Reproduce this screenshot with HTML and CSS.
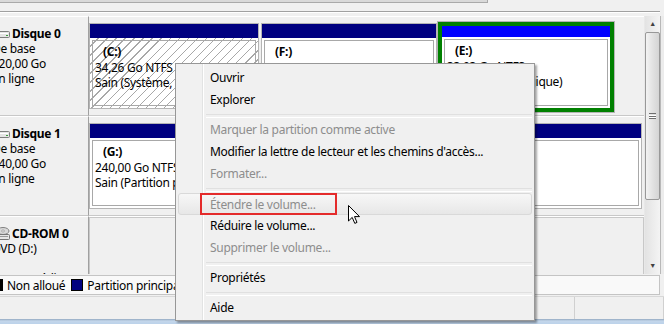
FILE: index.html
```html
<!DOCTYPE html>
<html lang="fr">
<head>
    <meta charset="UTF-8">
    <title>Gestion des disques</title>
    <link rel="stylesheet" href="styles.css">
</head>
<body>
    <div class="window">
        <!-- bottom of the volume list pane + splitter -->
        <div class="top-strip">
            <div class="hscroll"></div>
            <div class="splitter"></div>
        </div>

        <div class="main">
            <div class="disks">
                <!-- Disque 0 -->
                <div class="disk">
                    <div class="disk-label">
                        <div class="line title">
                            <svg class="drive-icon" width="20" height="10" viewBox="0 0 20 10"><rect x="1.5" y="2.5" width="17" height="6" rx="1" fill="#e4e4e4" stroke="#7d7d7d"/><rect x="3" y="4" width="14" height="1" fill="#fff"/><rect x="15" y="6" width="2" height="1" fill="#3c9a3c"/></svg>
                            <b>Disque 0</b>
                        </div>
                        <div class="line">De base</div>
                        <div class="line">120,00 Go</div>
                        <div class="line">En ligne</div>
                    </div>
                    <div class="disk-body">
                        <div class="part part-c">
                            <div class="part-bar"></div>
                            <div class="part-body hatched">
                                <div class="part-inner">
                                    <div class="name">(C:)</div>
                                    <div>34,26 Go NTFS</div>
                                    <div>Sain (Système, Démarrer, Fichier d'échange, Actif, Vidage sur incident, Partition principale)</div>
                                </div>
                            </div>
                        </div>
                        <div class="part part-f">
                            <div class="part-bar"></div>
                            <div class="part-body">
                                <div class="part-inner">
                                    <div class="name">(F:)</div>
                                    <div>51,81 Go NTFS</div>
                                    <div>Sain (Partition principale)</div>
                                </div>
                            </div>
                        </div>
                        <div class="part part-e">
                            <div class="part-bar logical"></div>
                            <div class="part-body">
                                <div class="part-inner">
                                    <div class="name">(E:)</div>
                                    <div>33,93 Go NTFS</div>
                                    <div>Sain (Lecteur logique)</div>
                                </div>
                            </div>
                        </div>
                    </div>
                </div>

                <!-- Disque 1 -->
                <div class="disk">
                    <div class="disk-label">
                        <div class="line title">
                            <svg class="drive-icon" width="20" height="10" viewBox="0 0 20 10"><rect x="1.5" y="2.5" width="17" height="6" rx="1" fill="#e4e4e4" stroke="#7d7d7d"/><rect x="3" y="4" width="14" height="1" fill="#fff"/><rect x="15" y="6" width="2" height="1" fill="#3c9a3c"/></svg>
                            <b>Disque 1</b>
                        </div>
                        <div class="line">De base</div>
                        <div class="line">240,00 Go</div>
                        <div class="line">En ligne</div>
                    </div>
                    <div class="disk-body">
                        <div class="part part-g">
                            <div class="part-bar"></div>
                            <div class="part-body">
                                <div class="part-inner">
                                    <div class="name">(G:)</div>
                                    <div>240,00 Go NTFS</div>
                                    <div>Sain (Partition principale)</div>
                                </div>
                            </div>
                        </div>
                    </div>
                </div>

                <!-- CD-ROM 0 -->
                <div class="disk">
                    <div class="disk-label">
                        <div class="line title">
                            <svg class="drive-icon" width="20" height="14" viewBox="0 0 20 14"><ellipse cx="12" cy="4" rx="6" ry="3.5" fill="#d8d8d8" stroke="#808080"/><ellipse cx="12" cy="4" rx="1.5" ry="1" fill="#fff" stroke="#808080" stroke-width="0.6"/><rect x="4.5" y="7.5" width="14" height="5" rx="1" fill="#e6e6e6" stroke="#777"/><rect x="6" y="9" width="11" height="1" fill="#999"/></svg>
                            <b>CD-ROM 0</b>
                        </div>
                        <div class="line">DVD (D:)</div>
                        <div class="line">&nbsp;</div>
                        <div class="line">Aucun média</div>
                    </div>
                    <div class="disk-body">
                        <div class="part-empty"></div>
                    </div>
                </div>
            </div>

            <div class="scrollbar">
                <div class="sb-btn">&#9650;</div>
                <div class="sb-track">
                    <div class="sb-thumb"><span class="grip"></span></div>
                </div>
                <div class="sb-btn">&#9660;</div>
            </div>
            <div class="frame-right"></div>
        </div>

        <div class="legend">
            <span class="swatch unalloc"></span><span>Non alloué</span>
            <span class="swatch primary"></span><span>Partition principale</span>
            <span class="swatch extended"></span><span>Partition étendue</span>
            <span class="swatch free"></span><span>Espace libre</span>
            <span class="swatch logical"></span><span>Lecteur logique</span>
        </div>

        <div class="statusbar">
            <div class="status-cell wide"></div>
            <div class="status-cell"></div>
        </div>
        <div class="frame-bottom"></div>
    </div>

    <!-- Context menu opened on the partition -->
    <div class="menu">
        <div class="item">Ouvrir</div>
        <div class="item">Explorer</div>
        <div class="sep"></div>
        <div class="item disabled">Marquer la partition comme active</div>
        <div class="item">Modifier la lettre de lecteur et les chemins d'accès...</div>
        <div class="item disabled">Formater...</div>
        <div class="sep"></div>
        <div class="item disabled hover"><span class="marked">Étendre le volume...</span></div>
        <div class="item">Réduire le volume...</div>
        <div class="item disabled">Supprimer le volume...</div>
        <div class="sep"></div>
        <div class="item">Propriétés</div>
        <div class="sep"></div>
        <div class="item">Aide</div>
    </div>

    <svg class="cursor" width="13" height="20" viewBox="0 0 13 20">
        <path d="M0.5 0.5 L0.5 16 L4.2 12.4 L6.8 18.4 L9 17.4 L6.5 11.6 L11.5 11.6 Z" fill="#fff" stroke="#000" stroke-width="1" stroke-linejoin="miter"/>
    </svg>
</body>
</html>
```

FILE: styles.css
```css
* {
    box-sizing: border-box;
}

body {
    margin: 0;
    width: 664px;
    height: 324px;
    overflow: hidden;
    position: relative;
    background-color: #f0f0f0;
    font-family: "Segoe UI", "Noto Sans", sans-serif;
    font-size: 12px;
    letter-spacing: -0.3px;
    color: #000;
}

.window {
    display: flex;
    flex-direction: column;
    height: 324px;
}

/* strip left over from the upper pane */
.top-strip {
    height: 16px;
    flex: none;
}

.hscroll {
    width: 488px;
    height: 3px;
    background: #d9d9d9;
    border-bottom: 1px solid #a9a9a9;
    border-right: 1px solid #a9a9a9;
}

.splitter {
    margin-top: 8px;
    height: 2px;
    border-top: 1px solid #a0a0a0;
    border-bottom: 1px solid #fff;
    margin-right: 4px;
}

/* disk graphical view */
.main {
    display: flex;
    height: 258px;
    flex: none;
}

.disks {
    width: 644px;
    overflow: hidden;
}

.disk {
    display: flex;
    height: 100px;
}

.disk-label {
    width: 89px;
    flex: none;
    overflow: hidden;
    padding-top: 9px;
    border-top: 1px solid #fff;
    border-right: 1px solid #a0a0a0;
    border-bottom: 1px solid #c8c8c8;
}

.disk-label .line {
    margin-left: -8px;
    line-height: 15px;
    white-space: nowrap;
}

.disk-label .title {
    display: flex;
    align-items: center;
    margin-left: -9px;
}

.drive-icon {
    flex: none;
    margin-right: 1px;
}

.disk-body {
    flex: 1;
    display: flex;
    padding: 6px 0 6px 0;
    border-top: 1px solid #fff;
    border-bottom: 1px solid #c8c8c8;
}

/* partitions */
.part {
    display: flex;
    flex-direction: column;
    flex: none;
    border: 1px solid #b4b4b4;
    background: #fff;
}

.part-c { width: 170px; margin-right: 2px; }
.part-f { width: 176px; margin-right: 1px; }
.part-g { width: 553px; }

.part-e {
    width: 176px;
    border: 4px solid #008000;
    outline: 1px solid #b4b4b4;
    margin-top: -1px;
    margin-bottom: -3px;
}

.part-bar {
    height: 14px;
    background: #000080;
    flex: none;
}

.part-bar.logical {
    height: 11px;
    background: #0000ff;
}

.part-body {
    flex: 1;
    padding: 2px 2px 2px 2px;
    background: #fff;
}

.part-body.hatched {
    background: repeating-linear-gradient(135deg, #fff 0, #fff 5.4px, #a8a8a8 5.4px, #a8a8a8 6.4px);
}

.part-inner {
    height: 100%;
    border: 1px solid #a8a8a8;
    padding: 3px 0 0 2px;
    line-height: 15.5px;
    white-space: nowrap;
    overflow: hidden;
}

.part-inner .name {
    padding-left: 8px;
    font-weight: bold;
}

.part-empty {
    width: 555px;
    border: 1px solid #c8c8c8;
    margin-top: -6px;
    margin-bottom: -20px;
}

/* vertical scrollbar */
.scrollbar {
    width: 16px;
    flex: none;
    display: flex;
    flex-direction: column;
    background: linear-gradient(90deg, #e3e3e3, #f4f4f4);
    border-left: 1px solid #e8e8e8;
}

.sb-btn {
    height: 16px;
    font-size: 7px;
    line-height: 16px;
    text-align: center;
    color: #404040;
}

.sb-track {
    flex: 1;
}

.sb-thumb {
    height: 168px;
    border: 1px solid #989898;
    border-radius: 2px;
    background: linear-gradient(90deg, #f3f3f3, #e2e2e2 50%, #d4d4d4);
    display: flex;
    align-items: center;
    justify-content: center;
}

.grip {
    width: 7px;
    height: 6px;
    border-top: 1px solid #707070;
    border-bottom: 1px solid #707070;
    background: linear-gradient(#fff 0 1px, #707070 1px 2px, #fff 2px 3px, transparent 3px);
    background-position: 0 1px;
}

.frame-right {
    width: 4px;
    flex: none;
    background: #ececec;
    border-left: 1px solid #b8b8b8;
}

/* legend */
.legend {
    margin-top: 1px;
    height: 20px;
    width: 660px;
    flex: none;
    display: flex;
    align-items: center;
    gap: 4px;
    background: #f9f9f9;
    border-top: 1px solid #c4c4c4;
    border-bottom: 1px solid #c4c4c4;
    border-right: 1px solid #c4c4c4;
    white-space: nowrap;
}

.swatch {
    width: 12px;
    height: 12px;
    flex: none;
    border: 1px solid #000;
}

.swatch.unalloc {
    background: #000;
    margin-left: -9px;
}

.swatch.primary { background: #000080; margin-left: 2px; }
.swatch.extended { background: #008000; margin-left: 2px; }
.swatch.free { background: #80ff80; margin-left: 2px; }
.swatch.logical { background: #0000ff; margin-left: 2px; }

/* status bar */
.statusbar {
    height: 23px;
    flex: none;
    display: flex;
    border-top: 1px solid #d8d8d8;
    margin-top: 1px;
}

.status-cell {
    flex: 1;
    border-right: 1px solid #d0d0d0;
}

.status-cell.wide {
    flex: none;
    width: 575px;
}

.frame-bottom {
    flex: 1;
    background: linear-gradient(#93a9c1, #c3d6ea 2px, #bcd2ea);
}

/* context menu */
.menu {
    position: absolute;
    left: 175px;
    top: 63px;
    width: 360px;
    padding: 3px 2px 1px 2px;
    background: linear-gradient(90deg, #f1f1f1 0 26px, #e2e3e3 26px 27px, #fff 27px 28px, #f0f0f0 28px);
    border: 1px solid #979797;
    box-shadow: 2px 2px 2px rgba(0, 0, 0, 0.35);
}

.item {
    height: 22px;
    line-height: 22px;
    padding-left: 32px;
    white-space: nowrap;
}

.item.disabled {
    color: #8d8d8d;
}

.item.hover {
    border: 1px solid #d9d9d9;
    border-radius: 3px;
    background: linear-gradient(#f7f7f7, #e7e7e7);
    line-height: 20px;
    padding-left: 31px;
}

.marked {
    display: inline-block;
    height: 22px;
    margin: -1px 0 0 -10px;
    padding: 0 19px 0 8px;
    line-height: 19px;
    border: 2px solid #e42b2b;
}

.sep {
    height: 8px;
    margin-left: 28px;
    padding-top: 3px;
}

.sep::after {
    content: "";
    display: block;
    height: 2px;
    border-top: 1px solid #e0e0e0;
    border-bottom: 1px solid #fff;
}

.cursor {
    position: absolute;
    left: 348px;
    top: 205px;
}
```
